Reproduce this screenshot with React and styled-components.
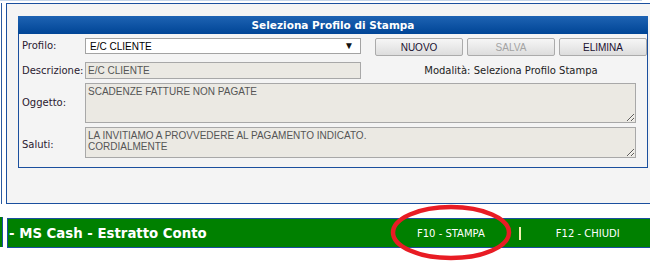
import React from "react";
import styled, { createGlobalStyle } from "styled-components";

const Global = createGlobalStyle`
  html, body { margin: 0; padding: 0; background: #ffffff; overflow: hidden; }
  body { width: 650px; height: 265px; font-family: "DejaVu Sans", Verdana, sans-serif; }
`;

const Page = styled.div`
  position: relative;
  width: 660px;
  height: 265px;
`;

const TopRule = styled.div`
  width: 642px;
  height: 1px;
  background: #c4d5ea;
`;

const FrameRow = styled.div`
  display: flex;
  margin-top: 2px;
`;

const LeftRule = styled.div`
  width: 1px;
  margin-left: 1px;
  background: #2a5aa0;
`;

const OuterPanel = styled.div`
  flex: 1;
  margin-left: 4px;
  height: 201px;
  box-sizing: border-box;
  border: 1px solid #1a4f9e;
  background: #f4f4f4;
  padding: 12px 0 0 11px;
`;

const Dialog = styled.div`
  width: 630px;
`;

const Header = styled.div`
  height: 18px;
  background: linear-gradient(#1e63b3, #004596);
  color: #ffffff;
  font: bold 10.5px/18px "DejaVu Sans", Verdana, sans-serif;
  text-align: center;
`;

const Box = styled.div`
  border: 1px solid #1a4f9e;
  border-top: none;
  height: 134px;
  padding-top: 4px;
  box-sizing: border-box;
  display: grid;
  grid-template-columns: 66px 276px 1fr;
  grid-template-rows: 20px 17px 40px 1fr;
  row-gap: 4px;
`;

const Label = styled.div`
  padding-left: 3px;
  font-size: 10px;
  color: #2a2030;
  align-self: ${(p) => p.$align || "center"};
  line-height: 16px;
  margin-top: ${(p) => p.$mt || "0"};
`;

const SelectBox = styled.div`
  height: 16px;
  box-sizing: border-box;
  border: 1px solid #a3a3a3;
  background: #ffffff;
  display: flex;
  align-items: center;
  justify-content: space-between;
  padding: 0 6px 0 4px;
  font: 10px "Liberation Sans", Arial, sans-serif;
  color: #000;
`;

const Arrow = styled.span`
  font-size: 10px;
  line-height: 10px;
  color: #111;
`;

const Buttons = styled.div`
  display: flex;
  gap: 4px;
  padding-left: 14px;
`;

const Button = styled.button`
  width: 88px;
  height: 18px;
  padding: 0;
  border: 1px solid #ababab;
  border-radius: 2px;
  background: linear-gradient(#f6f6f6, #dddddd);
  font: 10px "Liberation Sans", Arial, sans-serif;
  color: ${(p) => (p.disabled ? "#a3a3a3" : "#1a1030")};
`;

const Field = styled.input`
  height: 17px;
  box-sizing: border-box;
  border: 1px solid #a8a8a8;
  background: #ebe9e3;
  padding: 0 2px;
  margin: 0;
  font: 10px "Liberation Sans", Arial, sans-serif;
  color: #555;
  outline: none;
  width: 100%;
`;

const Mode = styled.div`
  align-self: center;
  text-align: center;
  font-size: 10px;
  color: #222;
  padding-left: 14px;
`;

const Area = styled.textarea`
  grid-column: 2 / 4;
  margin: 0 11px 0 0;
  height: ${(p) => p.$h}px;
  box-sizing: border-box;
  border: 1px solid #a8a8a8;
  background: #ebe9e3;
  padding: 2px 2px;
  font: 10px/11px "Liberation Sans", Arial, sans-serif;
  color: #555;
  outline: none;
  resize: both;
  align-self: start;
`;

const FooterRow = styled.div`
  display: flex;
  margin-top: 14px;
`;

const Bar = styled.div`
  flex: 1;
  margin-left: 4px;
  height: 28px;
  border: 1px solid #1a4f9e;
  background: #008000;
  display: flex;
  align-items: center;
  color: #ffffff;
`;

const LeftGreen = styled.div`
  width: 2px;
  height: 30px;
  margin-top: -1px;
  background: #008000;
  border-right: 1px solid #1a4f9e;
`;

const Title = styled.div`
  flex: 0 0 408px;
  padding-left: 1px;
  font: bold 13.3px "DejaVu Sans", Verdana, sans-serif;
  white-space: nowrap;
`;

const Actions = styled.div`
  display: flex;
  align-items: center;
  font: 10px "DejaVu Sans", Verdana, sans-serif;
  white-space: nowrap;
`;

const Sep = styled.span`
  margin: 0 35px 0 34px;
  width: 2px;
  height: 13px;
  background: #f3f0b0;
`;

const Circle = styled.svg`
  position: absolute;
  left: 389px;
  top: 203px;
  pointer-events: none;
`;

export default function App() {
  return (
    <Page>
      <Global />
      <TopRule />
      <FrameRow>
        <LeftRule />
        <OuterPanel>
          <Dialog>
            <Header>Seleziona Profilo di Stampa</Header>
            <Box>
              <Label $align="start">Profilo:</Label>
              <SelectBox>
                <span>E/C CLIENTE</span>
                <Arrow>▼</Arrow>
              </SelectBox>
              <Buttons>
                <Button>NUOVO</Button>
                <Button disabled>SALVA</Button>
                <Button>ELIMINA</Button>
              </Buttons>

              <Label>Descrizione:</Label>
              <Field readOnly value="E/C CLIENTE" />
              <Mode>Modalità: Seleziona Profilo Stampa</Mode>

              <Label>Oggetto:</Label>
              <Area $h={40} readOnly value="SCADENZE FATTURE NON PAGATE" />

              <Label $mt="-4px">Saluti:</Label>
              <Area
                $h={31}
                readOnly
                value={"LA INVITIAMO A PROVVEDERE AL PAGAMENTO INDICATO.\nCORDIALMENTE"}
              />
            </Box>
          </Dialog>
        </OuterPanel>
      </FrameRow>
      <FooterRow>
        <LeftGreen />
        <Bar>
          <Title>- MS Cash - Estratto Conto</Title>
          <Actions>
            <span>F10 - STAMPA</span>
            <Sep />
            <span>F12 - CHIUDI</span>
          </Actions>
        </Bar>
      </FooterRow>
      <Circle width="126" height="60" viewBox="0 0 126 60">
        <ellipse cx="62" cy="29.5" rx="58" ry="25.5" fill="none" stroke="#e81c24" strokeWidth="4.5" />
      </Circle>
    </Page>
  );
}
